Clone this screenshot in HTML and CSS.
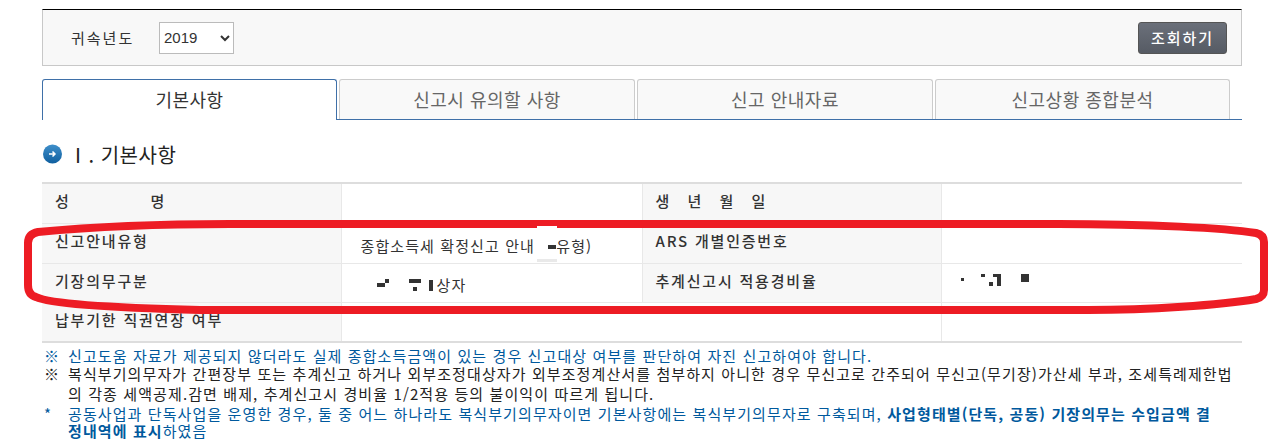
FILE: index.html
```html
<!doctype html>
<html lang="ko">
<head>
	<title>기본사항</title>
	<meta charset="utf-8" />
	<link rel="stylesheet" href="styles.css">
</head>
	<body>
		<div class="page">
			<div class="search">
				<label class="search-label" for="year">귀속년도</label>
				<select class="year" id="year">
					<option>2019</option>
				</select>
				<button class="search-btn">조회하기</button>
			</div>

			<ul class="tabs">
				<li class="tab active">기본사항</li>
				<li class="tab">신고시 유의할 사항</li>
				<li class="tab">신고 안내자료</li>
				<li class="tab">신고상황 종합분석</li>
			</ul>

			<h2 class="title">
				<svg class="title-icon" width="21" height="20" viewBox="0 0 21 20">
					<defs>
						<linearGradient id="ball" x1="0" y1="0" x2="0" y2="1">
							<stop offset="0" stop-color="#3f8fca" />
							<stop offset="1" stop-color="#0f5f9f" />
						</linearGradient>
					</defs>
					<circle cx="10.5" cy="10" r="9.5" fill="url(#ball)" />
					<path d="M7 10h6M10.5 7.5l2.5 2.5-2.5 2.5" fill="none" stroke="#fff" stroke-width="1.5" />
				</svg>
				Ⅰ. 기본사항
			</h2>

			<table class="info">
				<tr>
					<th><span class="spread-wide">성 명</span></th>
					<td></td>
					<th><span class="spread">생 년 월 일</span></th>
					<td></td>
				</tr>
				<tr>
					<th>신고안내유형</th>
					<td class="value">종합소득세 확정신고 안내 <svg class="mask" width="16" height="4" viewBox="0 0 16 4"><rect x="8" width="8" height="4" fill="#333" /></svg>유형)</td>
					<th>ARS 개별인증번호</th>
					<td></td>
				</tr>
				<tr class="short">
					<th>기장의무구분</th>
					<td class="value"><svg class="mask mask-type" width="56" height="16" viewBox="0 0 56 16" shape-rendering="crispEdges">
							<path d="M0 4h8v4H0zM8 0h4v4H8zM32 0h12v4H32zM36 8h4v4h-4zM52 1h4v11h-4z" fill="#333" />
						</svg>상자</td>
					<th>추계신고시 적용경비율</th>
					<td class="value"><svg class="mask mask-rate" width="68" height="12" viewBox="0 0 68 12" shape-rendering="crispEdges">
							<path d="M0 4h3v3H0zM20 0h4v3h-4zM28 8h4v4h-4zM32 0h8v12h-4V3h-4zM60 0h8v8h-8z" fill="#333" />
						</svg></td>
				</tr>
				<tr>
					<th>납부기한 직권연장 여부</th>
					<td></td>
					<th class="blank"></th>
					<td></td>
				</tr>
			</table>

			<div class="notes">
				<div class="note blue first">
					<span class="mark">※</span>
					<p>신고도움 자료가 제공되지 않더라도 실제 종합소득금액이 있는 경우 신고대상 여부를 판단하여 자진 신고하여야 합니다.</p>
				</div>
				<div class="note black">
					<span class="mark">※</span>
					<p>복식부기의무자가 간편장부 또는 추계신고 하거나 외부조정대상자가 외부조정계산서를 첨부하지 아니한 경우 무신고로 간주되어 무신고(무기장)가산세 부과, 조세특례제한법<br>의 각종 세액공제.감면 배제, 추계신고시 경비율 1/2적용 등의 불이익이 따르게 됩니다.</p>
				</div>
				<div class="note blue last">
					<span class="mark">*</span>
					<p>공동사업과 단독사업을 운영한 경우, 둘 중 어느 하나라도 복식부기의무자이면 기본사항에는 복식부기의무자로 구축되며, <b>사업형태별(단독, 공동) 기장의무는 수입금액 결<br>정내역에 표시</b>하였음</p>
				</div>
			</div>
		</div>

		<svg class="circle" width="1273" height="447" viewBox="0 0 1273 447">
			<path d="M230 224H1058C1150 224 1225 228 1256 233Q1264 235 1264 242V290Q1264 297 1256 299C1220 305 1150 310 1088 310H200C120 308 50 304 36 297Q28 295 28 285V243Q28 234 38 232C80 228 150 224 230 224Z" fill="none" stroke="#ed1c24" stroke-width="8" />
			<rect x="537" y="226" width="20" height="3" fill="#fff" />
			<rect x="537" y="259" width="20" height="3" fill="#e9e9e9" />
		</svg>
	</body>
</html>
```

FILE: styles.css
```css
html {
	background-color: #fff;
}

body {
	margin: 0;
	font-family: "Noto Sans CJK KR", "Liberation Sans", sans-serif;
	font-size: 14px;
	color: #333;
	overflow: hidden;
}

.page {
	width: 1200px;
	margin-left: 42px;
	padding-top: 9px;
}

.search {
	display: flex;
	align-items: center;
	box-sizing: border-box;
	height: 57px;
	padding: 0 14px 0 28px;
	background-color: #f8f8f8;
	border: 1px solid #c8c8c8;
	border-top: 1px solid #000;
}

.search-label {
	width: 88px;
	font-size: 15px;
	letter-spacing: 2px;
}

.year {
	box-sizing: border-box;
	width: 75px;
	height: 32px;
	padding-left: 0;
	font-family: "Liberation Sans", sans-serif;
	font-size: 15px;
	color: #333;
	background-color: #fff;
	border: 1px solid #bbb;
	border-radius: 0;
}

.search-btn {
	box-sizing: border-box;
	width: 89px;
	height: 32px;
	margin-left: auto;
	font-family: inherit;
	font-size: 15px;
	font-weight: 500;
	letter-spacing: 2px;
	color: #fff;
	background: linear-gradient(#6b707a, #565b64);
	border: 1px solid #555;
	border-radius: 3px;
}

.tabs {
	display: flex;
	gap: 2px;
	box-sizing: border-box;
	height: 41px;
	margin: 13px 0 0;
	padding: 0;
	list-style: none;
	border-bottom: 1px solid #3f70a8;
}

.tab {
	box-sizing: border-box;
	width: 296px;
	height: 40px;
	line-height: 39px;
	text-align: center;
	font-size: 18px;
	letter-spacing: 0.5px;
	color: #666;
	background-color: #f9f9f9;
	border: 1px solid #ccc;
	border-bottom: 0;
	border-radius: 3px 3px 0 0;
}

.tab:last-child {
	width: 295px;
}

.tab.active {
	width: 295px;
	height: 41px;
	color: #333;
	background-color: #fff;
	border-color: #3f70a8;
}

.title {
	display: flex;
	align-items: center;
	gap: 5px;
	height: 30px;
	margin: 19px 0 13px;
	font-size: 20px;
	font-weight: 400;
	letter-spacing: 0.5px;
	color: #222;
}

.info {
	width: 1200px;
	table-layout: fixed;
	border-collapse: collapse;
	border-top: 2px solid #ddd;
	border-bottom: 2px solid #ddd;
}

.info tr {
	height: 40px;
}

.info tr.short {
	height: 39px;
}

.info th,
.info td {
	padding: 0;
	border-top: 1px solid #e8e8e8;
	border-left: 1px solid #e8e8e8;
	font-size: 15px;
}

.info th {
	width: 299px;
	padding: 0 0 5px 13px;
	box-sizing: border-box;
	text-align: left;
	font-weight: 500;
	letter-spacing: 1.8px;
	background-color: #f7f7f7;
	vertical-align: middle;
}

.info th:first-child {
	border-left: 0;
}

.info th.blank {
	background-color: #fff;
	border-left: 0;
}

.info td.value {
	padding: 4px 0 0 19px;
	letter-spacing: 1.1px;
	color: #333;
}

.spread-wide {
	word-spacing: 74px;
}

.spread {
	word-spacing: 10.4px;
}

.mask {
	vertical-align: middle;
}

.mask-type {
	margin: 0 4px 0 16px;
}

.mask-rate {
	vertical-align: 6px;
}

.notes {
	margin-top: 4px;
	font-size: 15px;
	letter-spacing: 1.1px;
}

.note {
	display: grid;
	grid-template-columns: 26px 1fr;
	line-height: 20px;
}

.note.first {
	line-height: 17px;
}

.note.last {
	line-height: 17px;
	margin-top: 1px;
}

.note p {
	margin: 0;
	white-space: nowrap;
}

.mark {
	padding-left: 2px;
}

.blue {
	color: #00599d;
}

.black {
	color: #222;
}

.circle {
	position: absolute;
	left: 0;
	top: 0;
	pointer-events: none;
}
```
